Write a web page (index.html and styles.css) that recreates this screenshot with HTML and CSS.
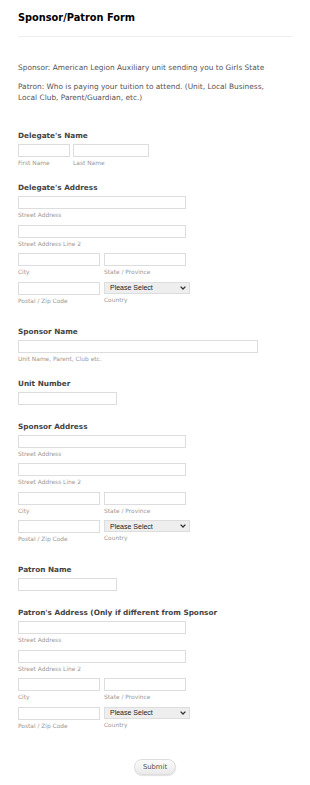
FILE: index.html
```html
<!DOCTYPE html>
<html lang="en">
<head>
  <meta charset="UTF-8" />
  <meta name="viewport" content="width=device-width, initial-scale=1.0" />
  <title>Sponsor/Patron Form</title>
  <link rel="stylesheet" href="styles.css">
</head>
<body>
<form class="form">
  <div class="form-header">
    <h1>Sponsor/Patron Form</h1>
  </div>

  <div class="form-text">
    <p>Sponsor: American Legion Auxiliary unit sending you to Girls State</p>
    <p>Patron: Who is paying your tuition to attend. (Unit, Local Business, Local Club, Parent/Guardian, etc.)</p>
  </div>

  <div class="field">
    <label class="field-label">Delegate's Name</label>
    <div class="row">
      <span class="sub"><input class="input first" type="text"><label>First Name</label></span>
      <span class="sub"><input class="input last" type="text"><label>Last Name</label></span>
    </div>
  </div>

  <div class="field">
    <label class="field-label">Delegate's Address</label>
    <div class="address">
      <span class="sub"><input class="input wide" type="text"><label>Street Address</label></span>
      <span class="sub"><input class="input wide" type="text"><label>Street Address Line 2</label></span>
      <div class="row">
        <span class="sub"><input class="input half" type="text"><label>City</label></span>
        <span class="sub"><input class="input half" type="text"><label>State / Province</label></span>
      </div>
      <div class="row">
        <span class="sub"><input class="input half" type="text"><label>Postal / Zip Code</label></span>
        <span class="sub">
          <span class="select-wrap">
            <select class="select"><option>Please Select</option></select>
            <svg class="chevron" width="6" height="4" viewBox="0 0 6 4"><path d="M0.6 0.6 L3 3 L5.4 0.6" fill="none" stroke="#333" stroke-width="1.3"/></svg>
          </span>
          <label>Country</label>
        </span>
      </div>
    </div>
  </div>

  <div class="field">
    <label class="field-label">Sponsor Name</label>
    <span class="sub"><input class="input full" type="text"><label>Unit Name, Parent, Club etc.</label></span>
  </div>

  <div class="field field-short">
    <label class="field-label">Unit Number</label>
    <input class="input short" type="text">
  </div>

  <div class="field">
    <label class="field-label">Sponsor Address</label>
    <div class="address">
      <span class="sub"><input class="input wide" type="text"><label>Street Address</label></span>
      <span class="sub"><input class="input wide" type="text"><label>Street Address Line 2</label></span>
      <div class="row">
        <span class="sub"><input class="input half" type="text"><label>City</label></span>
        <span class="sub"><input class="input half" type="text"><label>State / Province</label></span>
      </div>
      <div class="row">
        <span class="sub"><input class="input half" type="text"><label>Postal / Zip Code</label></span>
        <span class="sub">
          <span class="select-wrap">
            <select class="select"><option>Please Select</option></select>
            <svg class="chevron" width="6" height="4" viewBox="0 0 6 4"><path d="M0.6 0.6 L3 3 L5.4 0.6" fill="none" stroke="#333" stroke-width="1.3"/></svg>
          </span>
          <label>Country</label>
        </span>
      </div>
    </div>
  </div>

  <div class="field field-short">
    <label class="field-label">Patron Name</label>
    <input class="input short" type="text">
  </div>

  <div class="field">
    <label class="field-label">Patron's Address (Only if different from Sponsor</label>
    <div class="address">
      <span class="sub"><input class="input wide" type="text"><label>Street Address</label></span>
      <span class="sub"><input class="input wide" type="text"><label>Street Address Line 2</label></span>
      <div class="row">
        <span class="sub"><input class="input half" type="text"><label>City</label></span>
        <span class="sub"><input class="input half" type="text"><label>State / Province</label></span>
      </div>
      <div class="row">
        <span class="sub"><input class="input half" type="text"><label>Postal / Zip Code</label></span>
        <span class="sub">
          <span class="select-wrap">
            <select class="select"><option>Please Select</option></select>
            <svg class="chevron" width="6" height="4" viewBox="0 0 6 4"><path d="M0.6 0.6 L3 3 L5.4 0.6" fill="none" stroke="#333" stroke-width="1.3"/></svg>
          </span>
          <label>Country</label>
        </span>
      </div>
    </div>
  </div>

  <div class="buttons">
    <button class="submit" type="submit">Submit</button>
  </div>
</form>
</body>
</html>
```

FILE: styles.css
```css
body {
  margin: 0;
  background: #fff;
  font-family: "DejaVu Sans", Verdana, sans-serif;
  color: #555;
}
.form {
  padding: 12px 18px 0;
}
.form-header {
  border-bottom: 1px solid #eee;
  padding-bottom: 12px;
}
.form-header h1 {
  margin: 0;
  font-size: 9.8px;
  line-height: 12px;
  font-weight: 700;
  color: #000;
}
.form-text {
  padding: 25px 18px 0 0;
  margin-bottom: 28px;
}
.form-text p {
  margin: 0 0 8px;
  font-size: 7.4px;
  line-height: 11px;
  color: #555;
}
.field {
  margin-bottom: 14px;
}
.field-short {
  padding-bottom: 3px;
}
.field-label {
  display: block;
  font-size: 7.3px;
  line-height: 10px;
  font-weight: 700;
  color: #444;
  margin-bottom: 3px;
}
.row {
  display: flex;
  gap: 3px;
}
.address .row {
  gap: 4px;
}
.address {
  display: flex;
  flex-direction: column;
  gap: 3.5px;
  padding-bottom: 6px;
}
.sub {
  display: flex;
  flex-direction: column;
  align-items: flex-start;
}
.sub label {
  font-size: 5.9px;
  line-height: 12px;
  color: #999;
}
.input {
  display: block;
  box-sizing: border-box;
  height: 13px;
  margin: 0;
  padding: 0 2px;
  border: 1px solid #ddd;
  border-radius: 0;
  background: #fff;
  font-size: 7px;
}
.first { width: 52px; }
.last { width: 76px; }
.wide { width: 168px; }
.half { width: 82px; }
.full { width: 240px; }
.short { width: 99px; }
.select-wrap {
  position: relative;
  display: block;
}
.select {
  display: block;
  box-sizing: border-box;
  width: 86px;
  height: 12px;
  margin: 0;
  padding: 0 0 0 5px;
  border: 1px solid #ddd;
  border-radius: 0;
  background: #eee;
  appearance: none;
  -webkit-appearance: none;
  font-family: "Liberation Sans", Arial, sans-serif;
  font-size: 7px;
  color: #222;
}
.chevron {
  position: absolute;
  right: 4px;
  top: 4px;
}
.buttons {
  text-align: center;
  padding: 2px 0 20px;
}
.submit {
  box-sizing: border-box;
  height: 16px;
  font-family: "DejaVu Sans", Verdana, sans-serif;
  font-size: 6.8px;
  color: #555;
  padding: 0 8px;
  border: 1px solid #ddd;
  border-radius: 9px;
  background: linear-gradient(#fbfbfb, #eaeaea);
  box-shadow: 0 1px 1px rgba(0, 0, 0, 0.12);
}
```
